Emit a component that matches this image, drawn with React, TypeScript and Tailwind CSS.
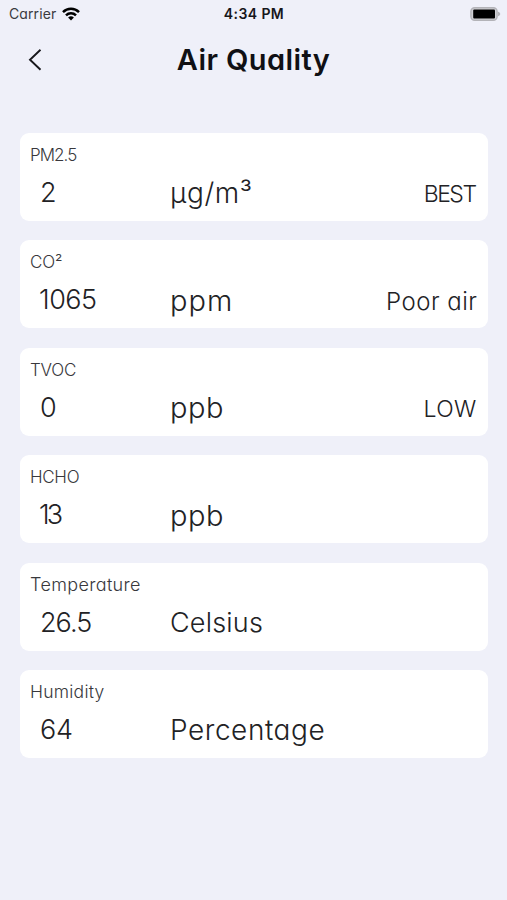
type Reading = {
  label: string;
  labelClass: string;
  value: string;
  valueClass: string;
  unit: string;
  unitClass: string;
  status?: string;
  statusClass?: string;
};

const readings: Reading[] = [
  {
    label: "PM2.5",
    labelClass: "text-[17px] tracking-[-0.95px]",
    value: "2",
    valueClass: "",
    unit: "μg/m³",
    unitClass: "text-[28px] tracking-[0.6px]",
    status: "BEST",
    statusClass: "mr-[2px] text-[23px] tracking-[-1.5px]",
  },
  {
    label: "CO²",
    labelClass: "text-[17px] tracking-[-0.1px]",
    value: "1065",
    valueClass: "-ml-px tracking-[-0.5px]",
    unit: "ppm",
    unitClass: "text-[29px] tracking-[1.1px]",
    status: "Poor air",
    statusClass: "text-[24px] tracking-[0.5px]",
  },
  {
    label: "TVOC",
    labelClass: "text-[17px] tracking-[-0.2px]",
    value: "0",
    valueClass: "",
    unit: "ppb",
    unitClass: "text-[29px] tracking-[0.5px]",
    status: "LOW",
    statusClass: "mr-px text-[23px] tracking-[0.3px]",
  },
  {
    label: "HCHO",
    labelClass: "text-[17px] tracking-[-0.3px]",
    value: "13",
    valueClass: "-ml-px tracking-[-3px]",
    unit: "ppb",
    unitClass: "text-[29px] tracking-[0.5px]",
  },
  {
    label: "Temperature",
    labelClass: "text-[18px] tracking-[0.35px]",
    value: "26.5",
    valueClass: "tracking-[-1px]",
    unit: "Celsius",
    unitClass: "tracking-[0.2px]",
  },
  {
    label: "Humidity",
    labelClass: "text-[17.5px] tracking-[0.25px]",
    value: "64",
    valueClass: "tracking-[-0.3px]",
    unit: "Percentage",
    unitClass: "text-[28px] tracking-[0.55px]",
  },
];

function StatusBar() {
  return (
    <div className="grid h-7 grid-cols-3 items-center pl-[9px] pr-[6px] text-[#17171b]">
      <div className="flex items-center gap-[6px]">
        <span className="text-[14px] leading-5 text-[#3a3a40] tracking-[0.1px]">Carrier</span>
        <svg width="18" height="14" viewBox="0 0 18 14" fill="none" stroke="#000" strokeWidth="2.5">
          <path d="M1 5.1a11.4 11.4 0 0 1 16 0" />
          <path d="M4 8.3a7.1 7.1 0 0 1 10 0" />
          <path d="M9 13.5 6.1 10.6a4.1 4.1 0 0 1 5.8 0Z" fill="#000" stroke="none" />
        </svg>
      </div>
      <span className="pr-[2px] text-center text-[14px] font-semibold leading-5 tracking-[0.4px]">4:34 PM</span>
      <svg className="justify-self-end" width="31" height="14" viewBox="0 0 31 14">
        <rect x="0.9" y="0.7" width="26.2" height="12.6" rx="3.8" fill="#d0d0d5" stroke="#b3b3b8" strokeWidth="1.4" />
        <rect x="3.2" y="2.6" width="21.8" height="8.8" rx="1" fill="#000" />
        <path d="M28 4.8c1.5.4 2.2 1.2 2.2 2.2s-.7 1.8-2.2 2.2Z" fill="#b3b3b8" />
      </svg>
    </div>
  );
}

function ReadingCard({ reading }: { reading: Reading }) {
  return (
    <section className="h-[88px] rounded-[9px] bg-white px-[10px] pt-[10px] text-[#222225]">
      <h2 className={`font-light leading-6 text-[#38383c] ${reading.labelClass}`}>{reading.label}</h2>
      <div className="mt-[6.4px] flex h-10 items-center whitespace-nowrap text-[27px] font-light">
        <div className="w-[140px] pl-[10px]">
          <span className={reading.valueClass}>{reading.value}</span>
        </div>
        <span className={reading.unitClass}>{reading.unit}</span>
        {reading.status && <span className={`ml-auto pt-[3px] ${reading.statusClass}`}>{reading.status}</span>}
      </div>
    </section>
  );
}

export default function App() {
  return (
    <main className="h-[900px] w-full bg-[#eff0f9] font-['Inter',sans-serif] [font-feature-settings:'cv11']">
      <StatusBar />
      <header className="grid h-[63px] grid-cols-[80px_1fr_80px] items-center">
        <button aria-label="Back" className="pl-[28px]">
          <svg width="15" height="24" viewBox="0 0 15 24" fill="none" stroke="#17171b" strokeWidth="1.9">
            <path d="M12.5 1.8 2 11.8l10.5 10" />
          </svg>
        </button>
        <h1 className="text-center text-[29px] font-semibold leading-9 tracking-[0.4px] text-[#101014]">
          Air Quality
        </h1>
      </header>
      <div className="flex flex-col gap-[19.5px] pl-5 pr-[19.5px] pt-[41.6px]">
        {readings.map((reading) => (
          <ReadingCard key={reading.label} reading={reading} />
        ))}
      </div>
    </main>
  );
}
